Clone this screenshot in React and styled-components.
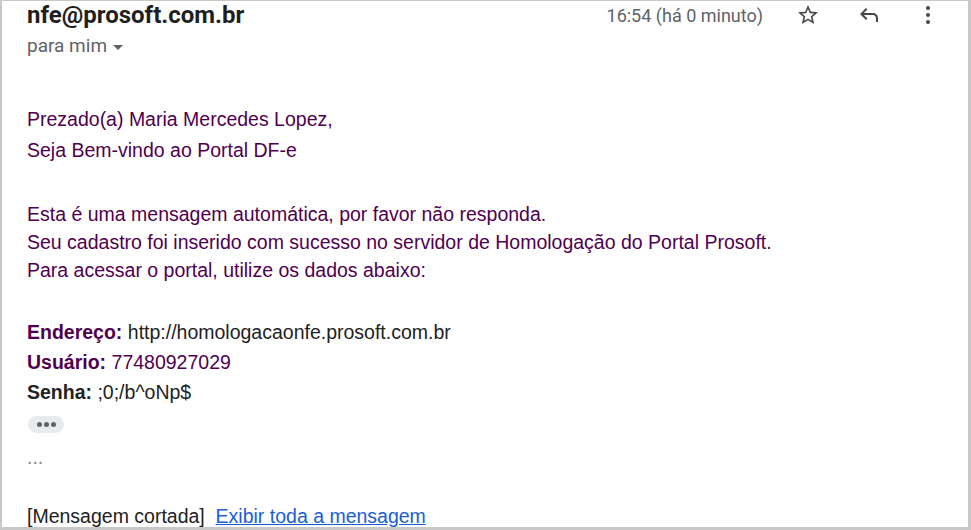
import React from "react";
import styled, { createGlobalStyle } from "styled-components";

const GlobalStyle = createGlobalStyle`
  html, body {
    margin: 0;
    padding: 0;
    background: #fff;
  }
`;

const Frame = styled.div`
  box-sizing: border-box;
  width: 971px;
  height: 530px;
  overflow: hidden;
  border-style: solid;
  border-color: #c8c8c8;
  border-width: 1px 3px 3px 2px;
  padding: 0 28px 0 25px;
  background: #fff;
`;

const Header = styled.div`
  display: flex;
  justify-content: space-between;
  align-items: flex-start;
`;

const SenderBlock = styled.div`
  display: flex;
  flex-direction: column;
`;

const Sender = styled.div`
  font-family: Roboto, "Liberation Sans", sans-serif;
  font-weight: 700;
  font-size: 24px;
  line-height: 28px;
  color: #1f1f1f;
`;

const Recipient = styled.div`
  display: flex;
  align-items: center;
  gap: 6px;
  margin-top: 7px;
  font-family: Roboto, "Liberation Sans", sans-serif;
  font-size: 19px;
  line-height: 20px;
  color: #5f6368;
`;

const Caret = styled.span`
  width: 0;
  height: 0;
  margin-top: 2px;
  border-left: 5px solid transparent;
  border-right: 5px solid transparent;
  border-top: 5px solid #5f6368;
`;

const Actions = styled.div`
  display: flex;
  align-items: center;
  height: 28px;
`;

const Time = styled.span`
  font-family: Roboto, "Liberation Sans", sans-serif;
  font-size: 18px;
  color: #5f6368;
  margin-right: 33px;
`;

const IconButton = styled.span`
  display: flex;
  width: 24px;
  height: 24px;
  margin-left: ${(p) => p.$gap || 0}px;
  color: #444746;
`;

const Body = styled.div`
  font-family: "Liberation Sans", Arial, sans-serif;
  font-size: 19.5px;
  color: #500050;
`;

const Para = styled.div`
  line-height: ${(p) => p.$lh}px;
  margin-top: ${(p) => p.$mt}px;
`;

const Label = styled.b`
  font-weight: 700;
  color: ${(p) => (p.$dark ? "#222" : "#500050")};
`;

const Value = styled.span`
  color: ${(p) => (p.$dark ? "#222" : "#500050")};
`;

const Pill = styled.div`
  display: flex;
  align-items: center;
  justify-content: center;
  gap: 2px;
  width: 36px;
  height: 17px;
  margin-top: 9px;
  margin-left: 1px;
  border-radius: 9px;
  background: #e8eaed;
`;

const Dot = styled.span`
  width: 5px;
  height: 5px;
  border-radius: 50%;
  background: #5f6368;
`;

const Ellipsis = styled.div`
  margin-top: 12px;
  line-height: 24px;
  color: #888;
`;

const Footer = styled.div`
  margin-top: 35px;
  line-height: 24px;
  color: #222;
`;

const MoreLink = styled.a`
  color: #1a5ed6;
  text-decoration: underline;
  cursor: pointer;
`;

const StarIcon = () => (
  <svg viewBox="0 0 24 24" width="24" height="24" fill="currentColor">
    <path d="M22 9.24l-7.19-.62L12 2 9.19 8.63 2 9.24l5.46 4.73L5.82 21 12 17.27 18.18 21l-1.63-7.03L22 9.24zM12 15.4l-3.76 2.27 1-4.28-3.32-2.88 4.38-.38L12 6.1l1.71 4.04 4.38.38-3.32 2.88 1 4.28L12 15.4z" />
  </svg>
);

const ReplyIcon = () => (
  <svg viewBox="0 0 24 24" width="24" height="24" fill="currentColor">
    <path d="M19 19v-4q0-1.25-.875-2.125T16 12H6.825l3.6 3.6L9 17l-6-6 6-6 1.425 1.4-3.6 3.6H16q2.075 0 3.538 1.463T21 15v4z" />
  </svg>
);

const MoreIcon = () => (
  <svg viewBox="0 0 24 24" width="24" height="24" fill="currentColor">
    <circle cx="12" cy="5" r="2" />
    <circle cx="12" cy="12" r="2" />
    <circle cx="12" cy="19" r="2" />
  </svg>
);

const App = () => {
  return (
    <>
      <GlobalStyle />
      <Frame>
        <Header>
          <SenderBlock>
            <Sender>nfe@prosoft.com.br</Sender>
            <Recipient>
              para mim <Caret />
            </Recipient>
          </SenderBlock>
          <Actions>
            <Time>16:54 (há 0 minuto)</Time>
            <IconButton>
              <StarIcon />
            </IconButton>
            <IconButton $gap={37}>
              <ReplyIcon />
            </IconButton>
            <IconButton $gap={35}>
              <MoreIcon />
            </IconButton>
          </Actions>
        </Header>

        <Body>
          <Para $lh={31} $mt={48}>
            Prezado(a) Maria Mercedes Lopez,
            <br />
            Seja Bem-vindo ao Portal DF-e
          </Para>
          <Para $lh={28} $mt={34}>
            Esta é uma mensagem automática, por favor não responda.
            <br />
            Seu cadastro foi inserido com sucesso no servidor de Homologação do Portal Prosoft.
            <br />
            Para acessar o portal, utilize os dados abaixo:
          </Para>
          <Para $lh={30} $mt={33}>
            <Label>Endereço:</Label> <Value $dark>http://homologacaonfe.prosoft.com.br</Value>
            <br />
            <Label>Usuário:</Label> <Value>77480927029</Value>
            <br />
            <Label $dark>Senha:</Label> <Value $dark>;0;/b^oNp$</Value>
          </Para>
          <Pill>
            <Dot />
            <Dot />
            <Dot />
          </Pill>
          <Ellipsis>...</Ellipsis>
          <Footer>
            [Mensagem cortada]&nbsp;&nbsp;<MoreLink>Exibir toda a mensagem</MoreLink>
          </Footer>
        </Body>
      </Frame>
    </>
  );
};

export default App;
